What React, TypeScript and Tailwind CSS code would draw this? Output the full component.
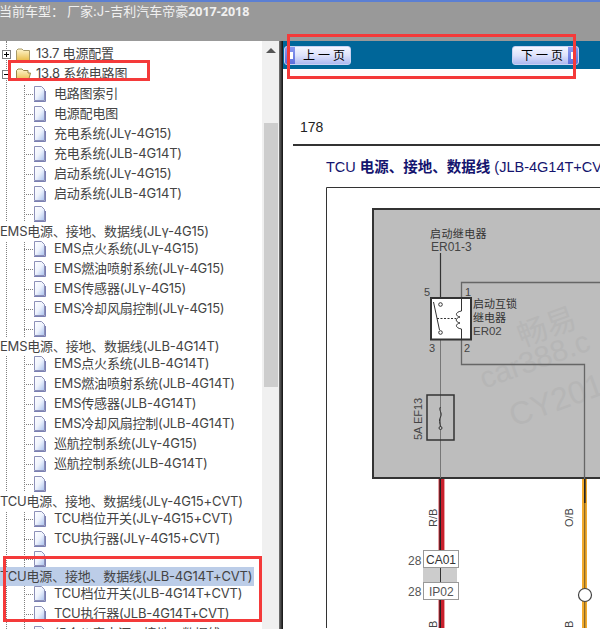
import { Fragment } from "react";

type Row =
  | { kind: "item"; label: string }
  | { kind: "head"; label: string; active?: boolean };

const item = (label: string): Row => ({ kind: "item", label });
const head = (label: string, active = false): Row => ({ kind: "head", label, active });

const rows: Row[] = [
  item("电路图索引"),
  item("电源配电图"),
  item("充电系统(JLγ-4G15)"),
  item("充电系统(JLB-4G14T)"),
  item("启动系统(JLγ-4G15)"),
  item("启动系统(JLB-4G14T)"),
  item(""),
  head("EMS电源、接地、数据线(JLγ-4G15)"),
  item("EMS点火系统(JLγ-4G15)"),
  item("EMS燃油喷射系统(JLγ-4G15)"),
  item("EMS传感器(JLγ-4G15)"),
  item("EMS冷却风扇控制(JLγ-4G15)"),
  item(""),
  head("EMS电源、接地、数据线(JLB-4G14T)"),
  item("EMS点火系统(JLB-4G14T)"),
  item("EMS燃油喷射系统(JLB-4G14T)"),
  item("EMS传感器(JLB-4G14T)"),
  item("EMS冷却风扇控制(JLB-4G14T)"),
  item("巡航控制系统(JLγ-4G15)"),
  item("巡航控制系统(JLB-4G14T)"),
  item(""),
  head("TCU电源、接地、数据线(JLγ-4G15+CVT)"),
  item("TCU档位开关(JLγ-4G15+CVT)"),
  item("TCU执行器(JLγ-4G15+CVT)"),
  item(""),
  head("TCU电源、接地、数据线(JLB-4G14T+CVT)", true),
  item("TCU档位开关(JLB-4G14T+CVT)"),
  item("TCU执行器(JLB-4G14T+CVT)"),
  item("组合仪表电源、接地、数据线"),
];

function FileIcon() {
  return (
    <svg width="13" height="16" viewBox="0 0 13 16" className="shrink-0">
      <defs>
        <linearGradient id="page" x1="0" y1="0" x2="1" y2="1">
          <stop offset="0" stopColor="#ffffff" />
          <stop offset="0.5" stopColor="#eef3fd" />
          <stop offset="1" stopColor="#a9c1ee" />
        </linearGradient>
      </defs>
      <path d="M1.5 0.5H8.5L11.5 3.5V14.5H1.5Z" fill="url(#page)" stroke="#8c90b8" />
      <path d="M1 15.5H12.5V5" fill="none" stroke="#7a7fb2" />
    </svg>
  );
}

function Folder({ open }: { open?: boolean }) {
  return (
    <svg width="16" height="15" viewBox="0 0 16 15" className="shrink-0">
      <defs>
        <linearGradient id="fold" x1="0" y1="0" x2="0" y2="1">
          <stop offset="0" stopColor="#fff6cf" />
          <stop offset="1" stopColor="#e8bd4a" />
        </linearGradient>
      </defs>
      {open ? (
        <path d="M1.5 13.5V3.5L3 2H7L8.5 3.5H13V6H15.5L13.5 13.5Z" fill="url(#fold)" stroke="#9a8748" />
      ) : (
        <path d="M1.5 13.5V3.5L3 2H7L8.5 3.5H14.5V13.5Z" fill="url(#fold)" stroke="#a89a68" />
      )}
    </svg>
  );
}

function Toggle({ open }: { open?: boolean }) {
  return (
    <span className="relative ml-[2px] mr-[4px] h-[9px] w-[9px] shrink-0 border border-[#808080] bg-white">
      <span className="absolute left-[1px] top-[3px] h-px w-[5px] bg-black" />
      {!open && <span className="absolute left-[3px] top-[1px] h-[5px] w-px bg-black" />}
    </span>
  );
}

function PageButton({ label, side }: { label: string; side: "left" | "right" }) {
  const cap = (
    <span className="flex h-full w-[10px] shrink-0 items-center justify-center bg-gradient-to-b from-[#8d9af0] to-[#5c6fdc]">
      <span className="h-[7px] w-[5px] bg-white" />
    </span>
  );
  return (
    <div className="flex h-[19px] w-[67px] overflow-hidden rounded-[3px] border border-[#c9d2f2] bg-gradient-to-b from-[#f4f6ff] via-[#dde2fb] to-[#aeb9f0] text-[12px] text-black">
      {side === "left" && cap}
      <span className="flex-1 whitespace-nowrap pl-[8px] leading-[17px] tracking-[3px]">{label}</span>
      {side === "right" && cap}
    </div>
  );
}

function Diagram() {
  const cjk = "'Noto Sans CJK SC', sans-serif";
  const latin = "'Liberation Sans', sans-serif";
  return (
    <svg width="317" height="449" viewBox="283 180 317 449" className="block">
      <path d="M600 188.5H326.5V629" fill="none" stroke="#333" />
      <rect x="373" y="210" width="240" height="269" fill="#bdbdbd" stroke="#333" strokeWidth="2" />

      <g fill="#b6b6b6" fontFamily={latin}>
        <text x="522" y="348" fontSize="30" fontFamily={cjk} transform="rotate(-20 522 348)">畅易</text>
        <text x="484" y="390" fontSize="30" transform="rotate(-20 484 390)">car388.c</text>
        <text x="514" y="428" fontSize="32" transform="rotate(-20 514 428)">CY201</text>
      </g>

      <path d="M440.5 254V299" stroke="#333" strokeWidth="1.2" />
      <path d="M600 283.5H461.5V365.5H584.5V629" fill="none" stroke="#666" strokeWidth="1.3" />
      <path d="M440.5 341V479" stroke="#777" />

      <rect x="431" y="299" width="40" height="41.5" fill="#fff" stroke="#333" strokeWidth="2" />
      <circle cx="440.5" cy="305.5" r="1.8" fill="#fff" stroke="#333" />
      <circle cx="440.5" cy="333.5" r="1.8" fill="#fff" stroke="#333" />
      <path d="M433.5 303L439.5 331" stroke="#333" />
      <path d="M437 319.5H456" stroke="#333" strokeDasharray="2 1.5" />
      <path d="M461.5 300V312C455 313 455 317 460 318C455 319 455 323 460 324C455 325 455 329 461.5 330V340" fill="none" stroke="#333" />

      <rect x="427" y="396" width="27" height="45" fill="none" stroke="#333" strokeWidth="1.5" />
      <path d="M440.5 408C438 411 443 414 440.5 418C438 422 441 426 440.5 430" fill="none" stroke="#333" />
      <circle cx="440.5" cy="429" r="1.5" fill="#bdbdbd" stroke="#333" />

      <g fontFamily={cjk} fontSize="11" fill="#333">
        <text x="430" y="239" letterSpacing="0.4">启动继电器</text>
        <text x="473" y="309">启动互锁</text>
        <text x="473" y="323">继电器</text>
      </g>
      <g fontFamily={latin} fontSize="11" fill="#444">
        <text x="431" y="252" fontSize="12">ER01-3</text>
        <text x="473" y="336" fontSize="11.5">ER02</text>
        <text x="424" y="297">5</text>
        <text x="465" y="297">1</text>
        <text x="429" y="353">3</text>
        <text x="464" y="353">2</text>
        <text x="422" y="441" transform="rotate(-90 422 441)">5A EF13</text>
        <text x="437" y="528" transform="rotate(-90 437 528)">R/B</text>
        <text x="573" y="528" transform="rotate(-90 573 528)">O/B</text>
        <text x="437" y="629" transform="rotate(-90 437 629)">B</text>
        <text x="573" y="629" transform="rotate(-90 573 629)">B</text>
      </g>

      <rect x="438" y="480" width="7" height="71" fill="#e8a0a4" />
      <rect x="439" y="480" width="5" height="71" fill="#c8202c" />
      <rect x="439.5" y="480" width="1.5" height="71" fill="#222" />
      <rect x="438" y="601" width="7" height="28" fill="#e8a0a4" />
      <rect x="439" y="601" width="5" height="28" fill="#c8202c" />
      <rect x="439.5" y="601" width="1.5" height="28" fill="#222" />

      <rect x="582" y="480" width="5" height="149" fill="#f3ab2d" />
      <rect x="584" y="480" width="1.3" height="149" fill="#8a6a2a" />
      <rect x="584" y="480" width="1.6" height="24" fill="#222" />
      <circle cx="585" cy="596" r="6.5" fill="#fff" stroke="#444" strokeWidth="1.2" />

      <rect x="423" y="568" width="34" height="15" fill="#cccccc" />
      <path d="M440.5 568V583" stroke="#333" />
      <rect x="423.5" y="551.5" width="35" height="17" fill="#fff" stroke="#999" />
      <rect x="423.5" y="583.5" width="35" height="17" fill="#fff" stroke="#999" />
      <g fontFamily={latin} fontSize="12" fill="#333">
        <text x="426" y="565">CA01</text>
        <text x="429" y="597" fill="#555">IP02</text>
        <text x="408" y="566" fill="#555">28</text>
        <text x="408" y="597" fill="#555">28</text>
      </g>
    </svg>
  );
}

export default function App() {
  return (
    <div className="relative h-[629px] w-[600px] overflow-hidden bg-white font-['Inter','Noto_Sans_CJK_SC',sans-serif]">
      <div className="h-[41px] border-t-2 border-[#5b7fd3] bg-[#999999]">
        <div className="-ml-px whitespace-nowrap pt-[1px] text-[13px] leading-[17px] text-[#f0f0f0]">
          当前车型：<span className="ml-[3px]">厂家:J-吉利汽车帝豪</span>
          <span className="font-['Noto_Sans',sans-serif] text-[12.5px] font-bold">2017-2018</span>
        </div>
      </div>

      <div className="flex h-[588px]">
        {/* tree */}
        <div className="relative h-full w-[262px] shrink-0 overflow-hidden text-[13px] tracking-[-0.2px] text-[#444444]">
          <span className="absolute bottom-0 left-[6px] top-0 border-l border-dotted border-[#808080]" />
          <span className="absolute bottom-0 left-[24px] top-[44px] border-l border-dotted border-[#808080]" />

          <div className="relative -mt-[17px]">
            <div className="flex h-5 items-center pl-[15px]">
              <Folder />
            </div>
            <div className="flex h-5 items-center">
              <Toggle />
              <Folder />
              <span className="ml-[5px] whitespace-nowrap">13.7 电源配置</span>
            </div>
            <div className="flex h-5 items-center">
              <Toggle open />
              <Folder open />
              <span className="ml-[5px] whitespace-nowrap">13.8 系统电路图</span>
            </div>
            {rows.map((row, i) => (
              <Fragment key={i}>
                {row.kind === "head" ? (
                  <div className="flex h-[15px] items-center">
                    <div
                      className={
                        row.active
                          ? "h-[19px] w-[254px] shrink-0 whitespace-nowrap bg-[#bccde8] leading-[19px]"
                          : "h-[19px] w-[254px] shrink-0 whitespace-nowrap bg-white leading-[19px]"
                      }
                    >
                      {row.label}
                    </div>
                  </div>
                ) : (
                  <div className="flex h-5 items-center pl-[24px]">
                    <span className="w-[9px] shrink-0 border-t border-dotted border-[#808080]" />
                    <FileIcon />
                    <span className="ml-[8px] whitespace-nowrap">{row.label}</span>
                  </div>
                )}
              </Fragment>
            ))}
          </div>
        </div>

        {/* scrollbar */}
        <div className="flex w-[17px] shrink-0 flex-col items-center bg-[#f0f0f0]">
          <span className="mt-[7px] h-0 w-0 border-x-[5px] border-b-[5px] border-x-transparent border-b-[#555555]" />
          <span className="mt-[70px] h-[264px] w-[14px] bg-[#cdcdcd]" />
        </div>
        <div className="w-[4px] shrink-0 bg-gradient-to-r from-[#777777] to-[#111111]" />

        {/* page */}
        <div className="min-w-0 flex-1 overflow-hidden">
          <div className="flex h-7 items-center gap-[161px] bg-[#006699] pl-px">
            <PageButton label="上一页" side="left" />
            <PageButton label="下一页" side="right" />
          </div>
          <div className="pl-[17px] pt-[50px] font-['Liberation_Sans',sans-serif] text-[14px] leading-4 text-[#222222]">
            178
          </div>
          <div className="ml-[10px] mt-[9px] h-[2px] bg-[#333333]" />
          <div className="ml-[43px] mt-[13px] whitespace-nowrap font-['Liberation_Sans','Noto_Sans_CJK_SC',sans-serif] text-[14.5px] leading-4 text-[#14146e]">
            TCU <span className="font-bold">电源、接地、数据线</span> (JLB-4G14T+CVT)
          </div>
          <div className="mt-[4px]">
            <Diagram />
          </div>
        </div>
      </div>

      {/* red annotations drawn over the screenshot */}
      <div className="absolute left-[8px] top-[60px] h-[21px] w-[142px] border-[3px] border-[#f43a3a]" />
      <div className="absolute left-[287px] top-[34px] h-[45px] w-[289px] border-[3px] border-[#f43a3a]" />
      <div className="absolute left-[3px] top-[556px] h-[66px] w-[259px] border-[3px] border-[#f43a3a]" />
    </div>
  );
}
